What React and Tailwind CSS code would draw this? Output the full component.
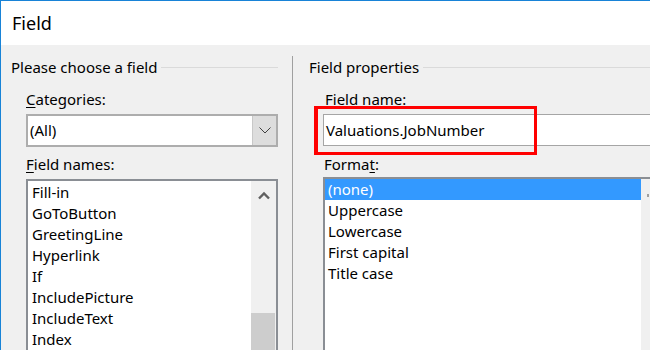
const fieldNames = ['Fill-in', 'GoToButton', 'GreetingLine', 'Hyperlink', 'If', 'IncludePicture', 'IncludeText', 'Index'];
const formats = ['(none)', 'Uppercase', 'Lowercase', 'First capital', 'Title case'];

const GroupHeading = ({ label, className = '' }) => (
  <div className={`flex items-center h-[20px] ${className}`}>
    <span className="whitespace-nowrap">{label}</span>
    <div className="flex-1 h-px bg-[#dadada] ml-[4px]" />
  </div>
);

export default function App() {
  return (
    <div className="relative w-[650px] h-[350px] overflow-hidden flex flex-col bg-[#f0f0f0] border-t border-l border-[#1883d7] text-black text-[15px] font-['Noto_Sans',sans-serif]">
      <div className="h-[44px] shrink-0 bg-white flex items-center pl-[11px] text-[18px]">Field</div>

      <div className="flex flex-1 min-h-0">
        {/* left: choose a field */}
        <div className="w-[291px] shrink-0 flex flex-col pt-[12px] pl-[10px] pr-[14px]">
          <GroupHeading label="Please choose a field" />
          <div className="flex flex-col flex-1 min-h-0 pl-[15px]">
            <div className="mt-[12px] h-[20px] leading-[20px]"><span className="underline underline-offset-2">C</span>ategories:</div>
            <div className="mt-[5px] h-[33px] flex border-2 border-[#adadad] bg-white">
              <div className="flex-1 flex items-center pl-[2px]">(All)</div>
              <div className="w-[24px] flex items-center justify-center bg-[#dddddd] border-l border-[#c8c8c8]">
                <svg width="12" height="7" viewBox="0 0 12 7">
                  <polyline points="0.5,0.5 6,6 11.5,0.5" fill="none" stroke="#404040" strokeWidth="1" />
                </svg>
              </div>
            </div>
            <div className="mt-[7px] h-[20px] leading-[20px]"><span className="underline underline-offset-2">F</span>ield names:</div>
            <div className="mt-[5px] flex-1 flex border-2 border-b-0 border-[#8a8e94] bg-white">
              <div className="flex-1 pt-[1px] pl-[4px]">
                {fieldNames.map(n => (
                  <div key={n} className="h-[21px] leading-[21px] whitespace-nowrap">{n}</div>
                ))}
              </div>
              <div className="w-[25px] flex flex-col bg-[#f0f0f0]">
                <div className="h-[28px] flex items-center justify-center">
                  <svg width="12" height="9" viewBox="0 0 12 9">
                    <polyline points="1,7.5 6,2.5 11,7.5" fill="none" stroke="#606060" strokeWidth="2.4" />
                  </svg>
                </div>
                <div className="flex-1" />
                <div className="h-[37px] mr-px bg-[#cdcdcd]" />
              </div>
            </div>
          </div>
        </div>

        <div className="w-px mt-[11px] bg-[#a0a0a0] shrink-0" />

        {/* right: field properties */}
        <div className="flex-1 flex flex-col pt-[12px] pl-[16px]">
          <GroupHeading label="Field properties" />
          <div className="flex flex-col flex-1 min-h-0 pl-[14px]">
            <div className="mt-[12px] h-[20px] leading-[20px] pl-[2px]">Field name:</div>
            <div className="mt-[5px] h-[32px] flex items-center pl-[2px] bg-white border border-r-0 border-[#a5a5a5]">Valuations.JobNumber</div>
            <div className="mt-[8px] h-[20px] leading-[20px] pl-px">Forma<span className="underline underline-offset-2">t</span>:</div>
            <div className="mt-[3px] flex-1 flex border-2 border-r-0 border-b-0 border-[#8a8e94] bg-white">
              <div className="flex-1">
                {formats.map((f, i) => (
                  <div key={f} className={`h-[21px] leading-[21px] pl-[3px] whitespace-nowrap ${i === 0 ? 'bg-[#3399ff] text-white' : ''}`}>{f}</div>
                ))}
              </div>
              <div className="w-[9px] bg-[#f0f0f0] pt-[15px]">
                <div className="ml-[6px] w-[2px] h-[3px] bg-[#a0a0a0]" />
              </div>
            </div>
          </div>
        </div>
      </div>

      <div className="absolute left-[313px] top-[105px] w-[223px] h-[49px] border-[3px] border-l-[4px] border-[#ff0000]" />
    </div>
  );
}
